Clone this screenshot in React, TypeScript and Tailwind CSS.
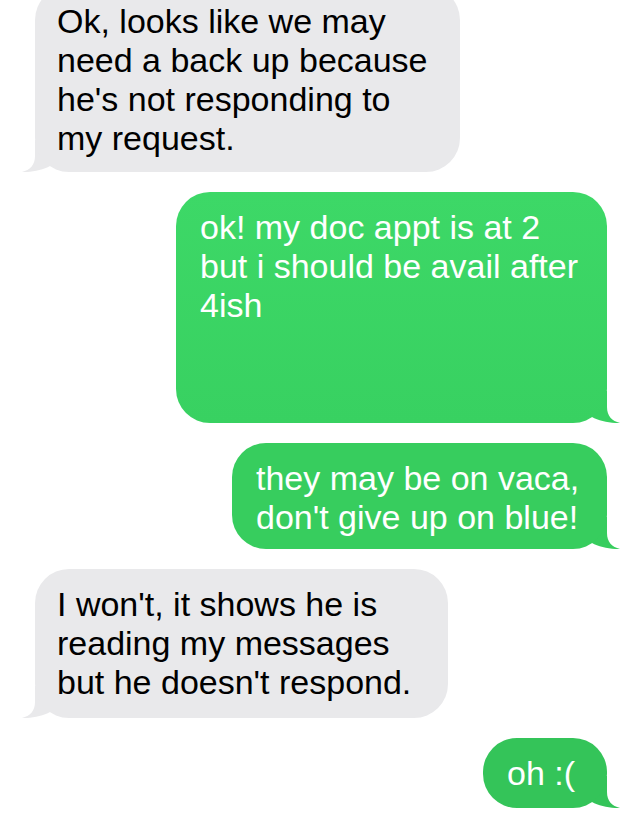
import React from 'react';

type Side = 'left' | 'right';

interface Message {
  id: number;
  side: Side;
  lines: string[];
  width: string;
  height: string;
  bg: string;
  tail: string;
}

const messages: Message[] = [
  {
    id: 1,
    side: 'left',
    lines: ['Ok, looks like we may', 'need a back up because', "he's not responding to", 'my request.'],
    width: 'w-[425px]',
    height: 'h-[186px]',
    bg: 'bg-[#e9e9eb]',
    tail: '#e9e9eb',
  },
  {
    id: 2,
    side: 'right',
    lines: ['ok! my doc appt is at 2', 'but i should be avail after', '4ish'],
    width: 'w-[431px]',
    height: 'h-[231px]',
    bg: 'bg-gradient-to-b from-[#3dd867] to-[#38d161]',
    tail: '#38d161',
  },
  {
    id: 3,
    side: 'right',
    lines: ['they may be on vaca,', "don't give up on blue!"],
    width: 'w-[375px]',
    height: 'h-[106px]',
    bg: 'bg-[#37cd5e]',
    tail: '#37cd5e',
  },
  {
    id: 4,
    side: 'left',
    lines: ["I won't, it shows he is", 'reading my messages', "but he doesn't respond."],
    width: 'w-[413px]',
    height: 'h-[149px]',
    bg: 'bg-[#e9e9eb]',
    tail: '#e9e9eb',
  },
  {
    id: 5,
    side: 'right',
    lines: ['oh :('],
    width: 'w-[124px]',
    height: 'h-[70px]',
    bg: 'bg-[#34c459]',
    tail: '#34c459',
  },
];

function Tail({ side, color }: { side: Side; color: string }) {
  // drawn relative to the bubble's bottom corner, tip sticks out ~13px
  return (
    <svg
      width="41"
      height="32"
      viewBox="-28 -32 41 32"
      className={
        side === 'right'
          ? 'absolute bottom-0 right-[-13px]'
          : 'absolute bottom-0 left-[-13px] -scale-x-100'
      }
    >
      <path
        d="M -22 -32 L 0 -32 L 0 -16 C 0 -7 5 -2 13 0 C 4 0.5 -8 -2 -15 -6 L -22 -6 Z"
        fill={color}
      />
    </svg>
  );
}

function Bubble({ msg }: { msg: Message }) {
  const isMe = msg.side === 'right';
  return (
    <div
      className={`relative ${msg.width} ${msg.height} ${isMe ? 'self-end' : 'self-start'}`}
    >
      <Tail side={msg.side} color={msg.tail} />
      <div
        className={`relative h-full rounded-[34px] pt-[16px] ${isMe ? 'pl-[24px] text-white' : 'pl-[22px] text-black'} ${msg.bg}`}
      >
        {msg.lines.map((line, i) => (
          <div key={i} className="whitespace-nowrap text-[34px] leading-[39px]">
            {line}
          </div>
        ))}
      </div>
    </div>
  );
}

export default function App() {
  return (
    <div
      className="h-[825px] w-[640px] overflow-hidden bg-white"
      style={{ fontFamily: '"Liberation Sans", Arial, sans-serif' }}
    >
      <div className="-mt-[14px] flex flex-col gap-5 pl-[35px] pr-[33px]">
        {messages.map((m) => (
          <Bubble key={m.id} msg={m} />
        ))}
      </div>
    </div>
  );
}
